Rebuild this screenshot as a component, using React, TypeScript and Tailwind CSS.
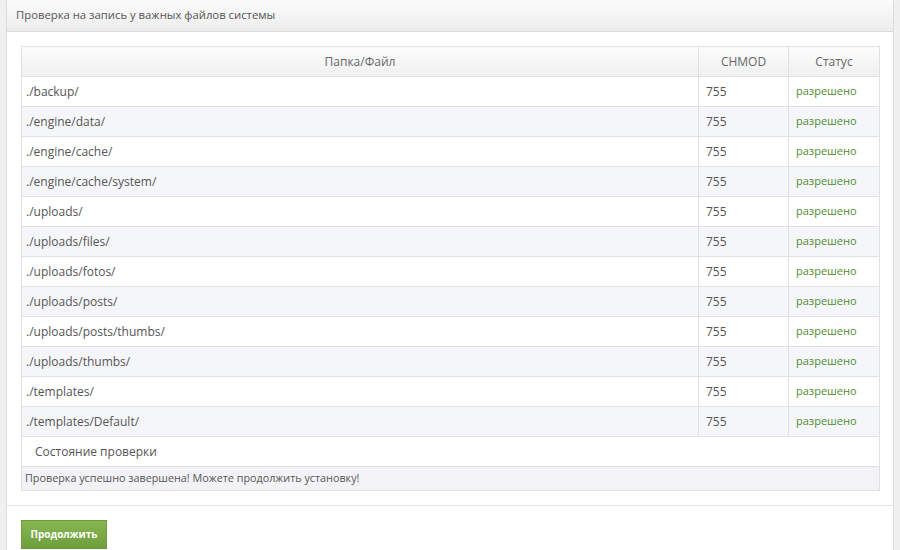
const rows = [
  './backup/',
  './engine/data/',
  './engine/cache/',
  './engine/cache/system/',
  './uploads/',
  './uploads/files/',
  './uploads/fotos/',
  './uploads/posts/',
  './uploads/posts/thumbs/',
  './uploads/thumbs/',
  './templates/',
  './templates/Default/',
];

export default function App() {
  return (
    <div
      className="h-[550px] w-[900px] overflow-hidden bg-[#f0f0f0] px-[6px] text-[12px] text-[#555]"
      style={{ fontFamily: '"Open Sans", "Liberation Sans", sans-serif' }}
    >
      <div className="h-[560px] border-x border-[#dcdcdc] bg-white">
        {/* panel header */}
        <div className="flex h-[32px] items-center border-b border-[#dadada] bg-gradient-to-b from-[#fcfcfc] to-[#ececec] px-[9px]">
          <span className="text-[11.3px] text-[#555]">Проверка на запись у важных файлов системы</span>
        </div>

        <div className="pb-[14px] pl-[14px] pr-[13px] pt-[14px]">
          <table className="w-full border-collapse border border-[#e1e1e1]">
            <thead>
              <tr className="h-[30px] bg-gradient-to-b from-[#fcfcfc] to-[#f0f0f0] text-[#666]">
                <th className="border border-[#e1e1e1] font-normal">Папка/Файл</th>
                <th className="w-[90px] border border-[#e1e1e1] font-normal">CHMOD</th>
                <th className="w-[91px] border border-[#e1e1e1] font-normal">Статус</th>
              </tr>
            </thead>
            <tbody>
              {rows.map((r, i) => (
                <tr key={r} className={i % 2 ? 'h-[30px] bg-[#f5f6f9]' : 'h-[30px] bg-white'}>
                  <td className="border border-[#e1e1e1] px-[4px]">{r}</td>
                  <td className="border border-[#e1e1e1] px-[7px]">755</td>
                  <td className="border border-[#e1e1e1] px-[7px] text-[11px] text-[#4f8c30]">разрешено</td>
                </tr>
              ))}
              <tr className="h-[30px] bg-white">
                <td colSpan={3} className="border border-[#e1e1e1] px-[13px]">
                  Состояние проверки
                </td>
              </tr>
              <tr className="h-[24px] bg-[#f3f3f7]">
                <td colSpan={3} className="border border-[#e1e1e1] px-[3px] text-[10.8px]">
                  Проверка успешно завершена! Можете продолжить установку!
                </td>
              </tr>
            </tbody>
          </table>
        </div>

        {/* footer */}
        <div className="border-t border-[#e3e3e3] px-[14px] pt-[14px]">
          <button className="h-[29px] w-[86px] border border-[#6d9b3d] bg-gradient-to-b from-[#88b552] to-[#6e9f3c] text-[10px] font-bold text-white">
            Продолжить
          </button>
        </div>
      </div>
    </div>
  );
}
